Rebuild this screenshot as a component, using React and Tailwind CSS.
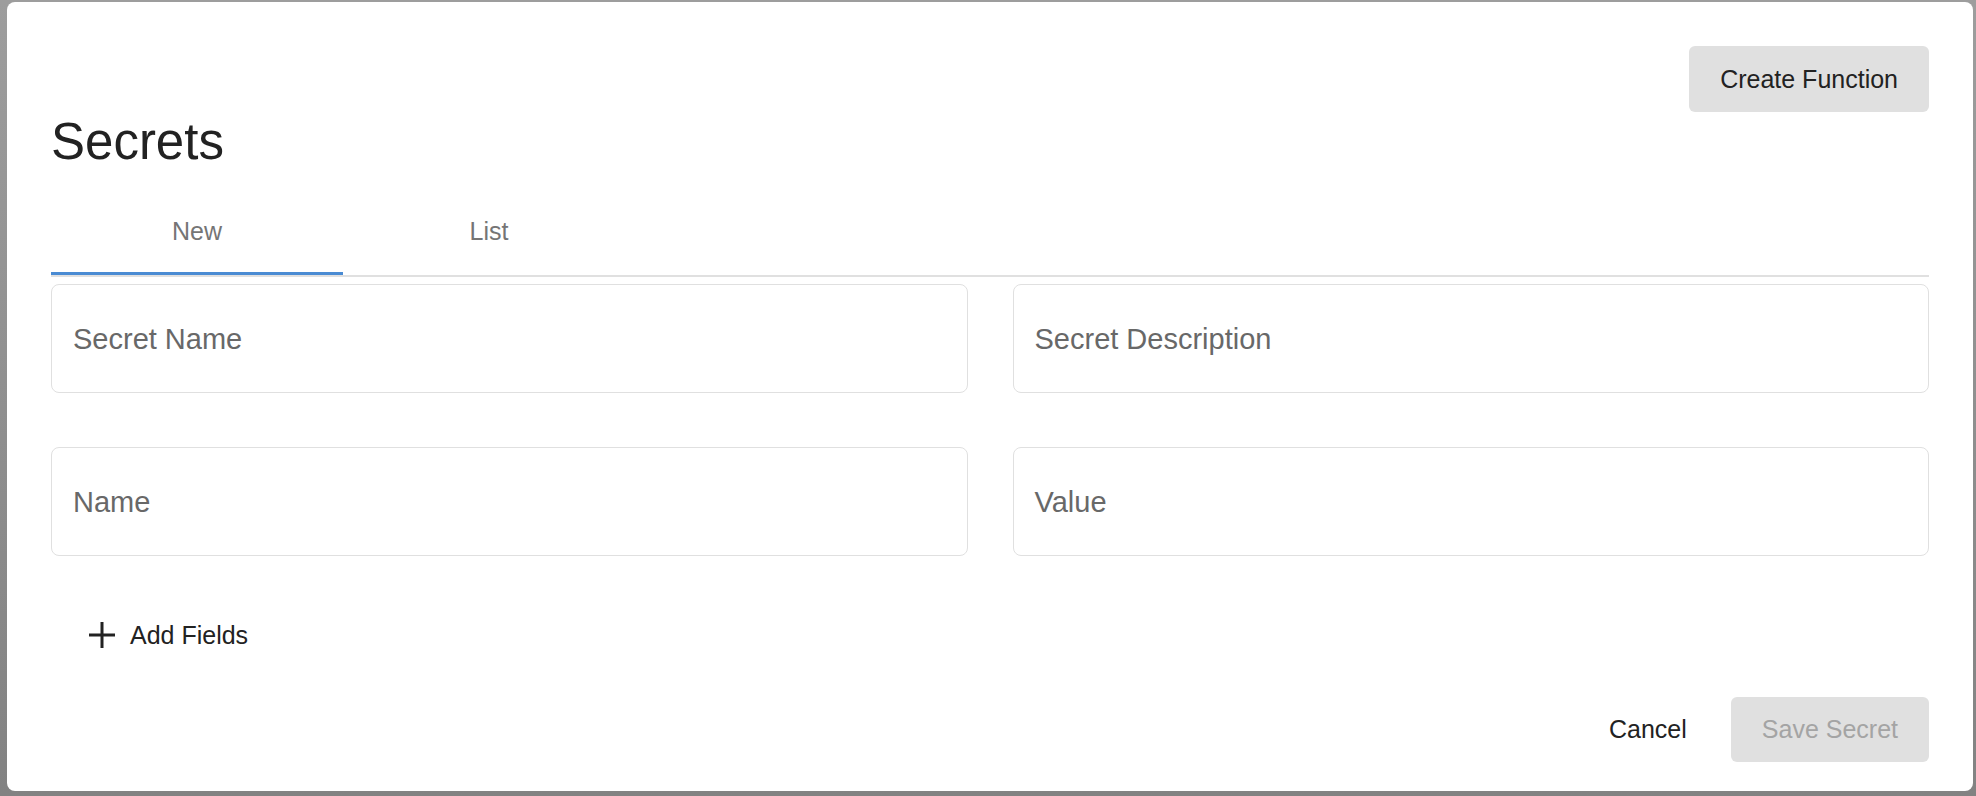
import React from "react";

function Field({ placeholder }) {
  return (
    <div className="h-[109px] border border-[#e0e0e0] rounded-[8px] flex items-center pl-[21px] pt-[2px] bg-white">
      <span className="text-[29px] leading-none text-[#686868]">{placeholder}</span>
    </div>
  );
}

export default function App() {
  return (
    <div
      className="w-full h-[796px] bg-gradient-to-b from-[#9d9d9d] to-[#828282] pt-[2px] pl-[7px] pr-[3px] pb-[5px]"
      style={{ fontFamily: '"Liberation Sans", Arial, Helvetica, sans-serif' }}
    >
      <div className="h-full bg-white rounded-[8px] flex flex-col px-[44px] pt-[44px] pb-[29px]">
        <div className="flex justify-end">
          <button className="h-[66px] px-[31px] rounded-[6px] bg-[#e0e0e0] text-[25px] leading-none text-[#222]">
            Create Function
          </button>
        </div>
        <h1 className="mt-[4px] text-[51px] leading-none font-normal text-[#222]">Secrets</h1>
        <div className="mt-[26px] flex border-b-2 border-[#e0e0e0]">
          <button className="w-[292px] h-[82px] pb-[2px] border-b-[3px] border-[#4a8bd3] text-[25px] leading-none text-[#757575]">
            New
          </button>
          <button className="w-[292px] h-[82px] pb-[2px] border-b-[3px] border-transparent text-[25px] leading-none text-[#757575]">
            List
          </button>
        </div>
        <div className="mt-[7px] grid grid-cols-2 gap-x-[45px] gap-y-[54px]">
          <Field placeholder="Secret Name" />
          <Field placeholder="Secret Description" />
          <Field placeholder="Name" />
          <Field placeholder="Value" />
        </div>
        <div className="mt-[54px] flex">
          <button className="h-[50px] pl-[38px] flex items-center gap-[15px] text-[25px] leading-none text-[#222]">
            <svg width="26" height="26" viewBox="0 0 26 26" fill="none" stroke="#222" strokeWidth="3">
              <path d="M13 0v26M0 13h26" />
            </svg>
            <span>Add Fields</span>
          </button>
        </div>
        <div className="mt-auto flex justify-end items-center gap-[44px]">
          <button className="text-[25px] leading-none text-[#222]">Cancel</button>
          <button className="h-[65px] px-[31px] rounded-[6px] bg-[#e0e0e0] text-[25px] leading-none text-[#a4a4a4]">
            Save Secret
          </button>
        </div>
      </div>
    </div>
  );
}
